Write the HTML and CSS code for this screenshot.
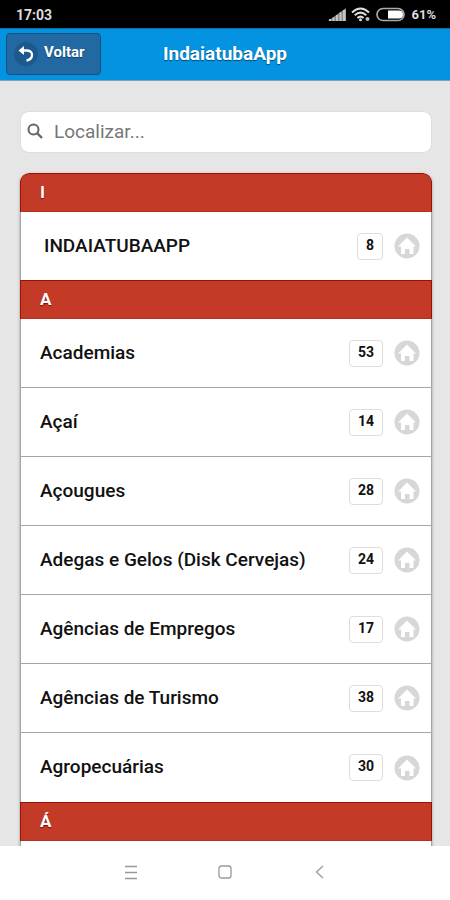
FILE: index.html
```
<!DOCTYPE html>
<html lang="pt-BR">

<head>

	<meta charset="utf-8">
	<meta name="viewport" content="width=device-width, initial-scale=1">
	<title>IndaiatubaApp</title>
	<link rel="stylesheet" href="styles.css">

</head>

<body>

	<!-- shapes used more than once -->
	<svg class="defs" aria-hidden="true">
		<symbol id="home" viewBox="0 0 26 26">
			<circle cx="13" cy="13" r="12.500" fill="#d7d7d7" />
			<path d="M13 4.500 L22 13.500 H19.500 V21 H15.500 V16 H11 V21 H7 V13.500 H4 Z" fill="#fff" />
		</symbol>
	</svg>

	<div class="status">
		<span class="clock">17:03</span>
		<svg class="signal" viewBox="0 0 18 14" width="18" height="14" aria-hidden="true">
			<path d="M0 13 L18 0 V13 Z" fill="#888" />
			<path d="M1 13 V11 H3 V13 Z M4.500 13 V9.500 H6.500 V13 Z M8 13 V7 H10 V13 Z M11.500 13 V4.500 H13.500 V13 Z M15 13 V2 H17.500 V13 Z" fill="#c4c4c4" />
		</svg>
		<svg class="wifi" viewBox="0 0 20 15" width="20" height="15" aria-hidden="true">
			<g fill="none" stroke="#ddd" stroke-width="2">
				<path d="M1 5.500 Q9.500 -2.500 18 5.500" />
				<path d="M3.700 8.300 Q9.500 3 15.300 8.300" />
				<path d="M6.400 11 Q9.500 8.200 12.600 11" />
			</g>
			<circle cx="9.500" cy="12.700" r="1.500" fill="#ddd" />
			<circle cx="16.500" cy="12" r="2" fill="#bbb" />
		</svg>
		<svg class="battery" viewBox="0 0 30 15" width="30" height="15" aria-hidden="true">
			<rect x="1" y="1.500" width="27" height="12" rx="6" fill="#000" stroke="#aaa" stroke-width="1.700" />
			<path d="M12 3.500 H23 A4 4 0 0 1 23 11.500 H12 Z" fill="#fff" />
		</svg>
		<span class="percent">61%</span>
	</div>

	<header class="header">
		<button type="button" class="back">
			<svg viewBox="0 0 24 24" width="24" height="24" aria-hidden="true">
				<circle cx="12" cy="12" r="12" fill="#1c5a8e" />
				<path d="M7 8.500 H13 Q18.500 9 18 13.500 Q17.500 17.500 12.500 18.500" fill="none" stroke="#fff" stroke-width="2.300" />
				<path d="M4.500 8.500 L10 4 V13 Z" fill="#fff" />
			</svg>
			<span class="label">Voltar</span>
		</button>
		<h1 class="title">IndaiatubaApp</h1>
	</header>

	<main class="content">

		<label class="search">
			<svg viewBox="0 0 16 16" width="16" height="16" aria-hidden="true">
				<circle cx="6.500" cy="6.500" r="5" fill="none" stroke="#666" stroke-width="2" />
				<path d="M10 10 L15 15" stroke="#666" stroke-width="2.400" />
			</svg>
			<input type="search" placeholder="Localizar..." aria-label="Localizar">
		</label>

		<div class="list">
			<h2 class="divider">I</h2>
			<a class="row indent" href="#indaiatubaapp"><span class="name">INDAIATUBAAPP</span><span class="count">8</span><svg class="icon" aria-hidden="true"><use href="#home" /></svg></a>
			<h2 class="divider">A</h2>
			<a class="row" href="#academias"><span class="name">Academias</span><span class="count">53</span><svg class="icon" aria-hidden="true"><use href="#home" /></svg></a>
			<a class="row" href="#acai"><span class="name">Açaí</span><span class="count">14</span><svg class="icon" aria-hidden="true"><use href="#home" /></svg></a>
			<a class="row" href="#acougues"><span class="name">Açougues</span><span class="count">28</span><svg class="icon" aria-hidden="true"><use href="#home" /></svg></a>
			<a class="row" href="#adegas"><span class="name">Adegas e Gelos (Disk Cervejas)</span><span class="count">24</span><svg class="icon" aria-hidden="true"><use href="#home" /></svg></a>
			<a class="row" href="#empregos"><span class="name">Agências de Empregos</span><span class="count">17</span><svg class="icon" aria-hidden="true"><use href="#home" /></svg></a>
			<a class="row" href="#turismo"><span class="name">Agências de Turismo</span><span class="count">38</span><svg class="icon" aria-hidden="true"><use href="#home" /></svg></a>
			<a class="row" href="#agropecuarias"><span class="name">Agropecuárias</span><span class="count">30</span><svg class="icon" aria-hidden="true"><use href="#home" /></svg></a>
			<h2 class="divider">Á</h2>
			<div class="row"></div>
		</div>

	</main>

	<nav class="navbar">
		<button type="button" aria-label="Menu">
			<svg viewBox="0 0 16 16" width="16" height="16"><path d="M2 2.500 H14 M2 8.500 H14 M2 14.500 H14" /></svg>
		</button>
		<button type="button" aria-label="Home">
			<svg viewBox="0 0 16 16" width="16" height="16"><rect x="2" y="2" width="12" height="12" rx="2.500" /></svg>
		</button>
		<button type="button" aria-label="Back">
			<svg viewBox="0 0 16 16" width="16" height="16"><path d="M12 2 L5.500 8 L12 14" /></svg>
		</button>
	</nav>

</body>

</html>
```

FILE: styles.css
```
* {
	box-sizing: border-box;
}
body {
	display: flex;
	flex-direction: column;
	height: 100vh;
	margin: 0;
	background-color: #e6e6e6;
	font-family: Roboto, "Liberation Sans", sans-serif;
	color: #111;
}
button {
	font-family: inherit;
	cursor: pointer;
}
.defs {
	display: none;
}

.status {
	display: flex;
	flex: none;
	align-items: center;
	gap: 5px;
	height: 28px;
	padding: 1px 14px 0 16px;
	background-color: #000;
	color: #ddd;
	font-size: 14px;
	font-weight: 700;
}
.clock {
	margin-right: auto;
}
.percent {
	font-size: 13px;
}

.header {
	display: grid;
	flex: none;
	grid-template-columns: 1fr auto 1fr;
	align-items: center;
	height: 53px;
	padding: 0 6px 2px;
	background-color: #0393e0;
	border-top: 1px solid #0b6da6;
	border-bottom: 1px solid #7ca6bf;
}
.back {
	display: flex;
	justify-self: start;
	align-items: center;
	gap: 6px;
	height: 42px;
	padding: 0 15px 0 7px;
	background-color: #2269a3;
	border: 1px solid #145080;
	border-radius: 4px;
	color: #fff;
	font-size: 15px;
	font-weight: 700;
	text-shadow: 0 1px 1px #123c5e;
}
.label {
	padding-bottom: 3px;
}
.title {
	margin: 0;
	color: #fff;
	font-size: 19px;
	font-weight: 700;
	text-shadow: 0 1px 1px #064a73;
}

.content {
	flex: 1;
	min-height: 0;
	overflow: hidden;
	padding: 30px 18px 0 20px;
}
.search {
	display: flex;
	align-items: center;
	gap: 9px;
	height: 42px;
	margin-bottom: 20px;
	padding: 0 6px 2px;
	background-color: #fff;
	border: 1px solid #ddd;
	border-radius: 9px;
}
.search input {
	flex: 1;
	min-width: 0;
	border: 0;
	outline: 0;
	background: none;
	font-family: inherit;
	font-size: 19px;
}
.search input::placeholder {
	color: #777;
}

.list {
	overflow: hidden;
	border-radius: 9px 9px 0 0;
	box-shadow: 0 1px 3px #999;
}
.divider {
	height: 39px;
	margin: 0;
	padding-left: 19px;
	background-color: #c33b26;
	border: 1px solid #9c0f06;
	border-bottom-color: #b4301f;
	color: #fff;
	font-size: 17px;
	font-weight: 700;
	line-height: 37px;
	text-shadow: 0 1px 1px #7c0d05;
}
.divider:first-child {
	border-radius: 9px 9px 0 0;
}
.row {
	display: flex;
	align-items: center;
	height: 69px;
	padding: 0 11px 0 19px;
	background-color: #fff;
	border: 1px solid #a5a5a5;
	border-top: 0;
	color: #111;
	text-decoration: none;
}
.row:has(+ .divider) {
	border-bottom: 0;
}
.indent {
	height: 68px;
	padding-left: 23px;
}
.name {
	flex: 1;
	padding-bottom: 2px;
	font-size: 19px;
	font-weight: 500;
}
.count {
	min-width: 26px;
	height: 27px;
	padding: 0 8px;
	border: 1px solid #ddd;
	border-radius: 4px;
	font-size: 14px;
	font-weight: 700;
	line-height: 23px;
	text-align: center;
}
.icon {
	width: 26px;
	height: 26px;
	margin-left: 11px;
}

.navbar {
	display: flex;
	flex: none;
	justify-content: center;
	gap: 62px;
	height: 54px;
	background-color: #fff;
}
.navbar button {
	width: 32px;
	padding: 0;
	border: 0;
	background: none;
}
.navbar svg {
	fill: none;
	stroke: #999;
	stroke-width: 1.3;
}
```
